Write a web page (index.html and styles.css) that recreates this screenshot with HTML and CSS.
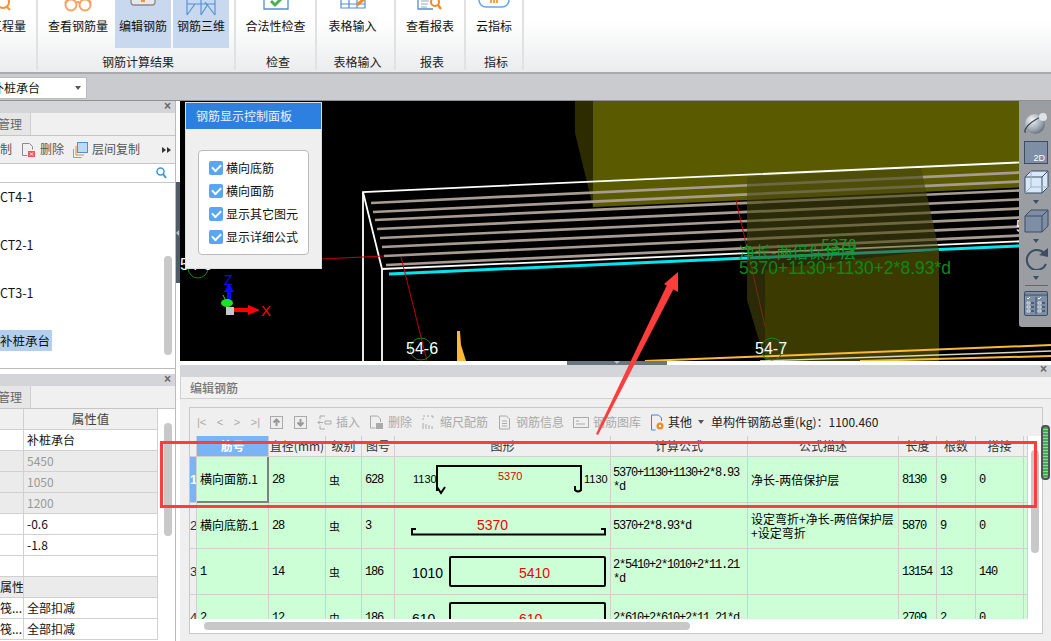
FILE: index.html
```html
<!DOCTYPE html>
<html lang="zh">
<head>
<meta charset="utf-8">
<title>编辑钢筋</title>
<link rel="stylesheet" href="styles.css">
</head>
<body>
<div class="app">
  <header class="ribbon">
    <section class="group group-a">
      <div class="btns"><div class="btn btn-cut"><svg class="ico" width="36" height="19" viewBox="0 0 36 19"><circle cx="13" cy="2" r="6" fill="none" stroke="#f3923c" stroke-width="2"/><path d="M17 7l3 3" stroke="#f3923c" stroke-width="2"/></svg><span>工程量</span></div></div>
    </section>
    <section class="group group-b">
      <div class="btns">
        <div class="btn btn-w70"><svg class="ico" width="36" height="19" viewBox="0 0 36 19"><g fill="none" stroke="#f6a266" stroke-width="2"><circle cx="11" cy="5" r="5.500"/><circle cx="25" cy="5" r="5.500"/><path d="M16 3q2-2 4 0M5 3L7 0M31 3l-2-3"/></g></svg><span>查看钢筋量</span></div>
        <div class="btn btn-w56 on"><svg class="ico" width="36" height="19" viewBox="0 0 36 19"><rect x="6" y="-6" width="24" height="11" rx="3" fill="#e8e8e8" stroke="#8a8a8a" stroke-width="1.300"/><path d="M16 1h4" stroke="#f3923c" stroke-width="2"/></svg><span>编辑钢筋</span></div>
        <div class="btn btn-w56 on"><svg class="ico" width="36" height="19" viewBox="0 0 36 19"><g fill="none" stroke="#4f8fd8" stroke-width="1.100"><path d="M4 0v15M32 0v15M18 0v15M4 15L12 4h20M18 15L25 4M4 4h8"/><path d="M32 15L22 2"/></g></svg><span>钢筋三维</span></div>
      </div>
      <div class="gname gname-b">钢筋计算结果</div>
    </section>
    <section class="group group-c">
      <div class="btns"><div class="btn btn-wide"><svg class="ico" width="36" height="19" viewBox="0 0 36 19"><path d="M6 0v9h24V0" fill="#fff" stroke="#4f8fd8" stroke-width="1.300"/><path d="M13 1l4 4 6-6" fill="none" stroke="#4caf50" stroke-width="3"/></svg><span>合法性检查</span></div></div>
      <div class="gname gname-c">检查</div>
    </section>
    <section class="group group-d">
      <div class="btns"><div class="btn btn-shift"><svg class="ico" width="36" height="19" viewBox="0 0 36 19"><path d="M6 0v8h24V0M6 4h24M14 0v8M22 0v8" fill="#fff" stroke="#4f8fd8" stroke-width="1.200"/><path d="M22 5l7-6" stroke="#f08a24" stroke-width="3"/></svg><span>表格输入</span></div></div>
      <div class="gname gname-b">表格输入</div>
    </section>
    <section class="group group-e">
      <div class="btns"><div class="btn btn-wide"><svg class="ico" width="36" height="19" viewBox="0 0 36 19"><path d="M6 0v9h15" fill="none" stroke="#4f8fd8" stroke-width="1.300"/><path d="M9 1h8M9 4h7M9 7h6" stroke="#8fa6bd"/><circle cx="23" cy="2" r="4" fill="#fff" stroke="#f08a24" stroke-width="2"/><path d="M26 5l3 4" stroke="#f08a24" stroke-width="2.400"/></svg><span>查看报表</span></div></div>
      <div class="gname gname-b">报表</div>
    </section>
    <section class="group group-f">
      <div class="btns"><div class="btn btn-wide"><svg class="ico" width="36" height="19" viewBox="0 0 36 19"><rect x="3" y="-10" width="30" height="17" rx="7" fill="#fff" stroke="#67a6ea" stroke-width="1.500"/><path d="M15 0v3M18 0v3M21 0v3" stroke="#f08a24" stroke-width="1.600"/></svg><span>云指标</span></div></div>
      <div class="gname gname-b">指标</div>
    </section>
  </header>

  <div class="subbar">
    <div class="dropdown"><span class="dd-text">补桩承台</span><i class="caret"></i></div>
  </div>

  <main class="main">
    <aside class="side">
      <section class="pane pane-top">
        <div class="pane-head">×</div>
        <div class="tabs"><div class="tab">管理</div></div>
        <div class="side-tools">
          <span class="cut-word">复制</span>
          <span class="stool"><svg width="15" height="16" viewBox="0 0 15 16"><path d="M1.500 1.500h7l3 3v3M1.500 1.500v12h5" fill="none" stroke="#8c8c8c"/><rect x="7" y="9" width="7" height="6" fill="#e45b5b"/><path d="M9 10.500l3 3M12 10.500l-3 3" stroke="#fff"/></svg>删除</span>
          <span class="stool"><svg width="15" height="16" viewBox="0 0 15 16"><rect x="4.500" y=".5" width="10" height="10" fill="#bcd9f7" stroke="#4f8fd8"/><path d="M3 4v9h8M.5 7v8.500h8" fill="none" stroke="#f08a24"/></svg>层间复制</span>
          <span class="more"><i></i><i></i></span>
        </div>
        <div class="search"><svg width="11" height="12" viewBox="0 0 11 12"><circle cx="4.500" cy="4.500" r="3.500" fill="none" stroke="#3e96d6" stroke-width="1.500"/><path d="M7 7l3 4" stroke="#3e96d6" stroke-width="2"/></svg></div>
        <ul class="items">
          <li>CT4-1</li>
          <li>CT2-1</li>
          <li>CT3-1</li>
          <li><span class="sel">补桩承台</span></li>
        </ul>
        <div class="vbar vbar-a"></div>
      </section>
      <section class="pane pane-bot">
        <div class="pane-head">×</div>
        <div class="tabs"><div class="tab">管理</div></div>
        <table class="prop">
          <colgroup><col class="p1"><col class="p2"></colgroup>
          <tr class="phead"><th></th><th>属性值</th></tr>
          <tr><td></td><td>补桩承台</td></tr>
          <tr class="dis"><td></td><td>5450</td></tr>
          <tr class="dis"><td></td><td>1050</td></tr>
          <tr class="dis"><td></td><td>1200</td></tr>
          <tr><td></td><td>-0.6</td></tr>
          <tr><td></td><td>-1.8</td></tr>
          <tr><td></td><td></td></tr>
          <tr class="grp"><td><span class="clip-r">属性</span></td><td></td></tr>
          <tr><td><span class="clip-r">筏...</span></td><td>全部扣减</td></tr>
          <tr><td><span class="clip-r">筏...</span></td><td>全部扣减</td></tr>
        </table>
        <div class="vbar vbar-b"></div>
      </section>
    </aside>
    <div class="split"><div class="split-handle"><i></i></div></div>

    <div class="work">
      <div class="view">
        <svg class="scene" viewBox="180 101 871 260" width="871" height="260" aria-hidden="true">
          <rect x="180" y="100" width="871" height="261" fill="#000"/>
          <polygon points="575,100 593,100 593,207 575,133" fill="#2c2c00"/>
          <polygon points="593,100 1051,100 1051,186 593,207" fill="#5a5a00"/>
          <g stroke="#a89c92" stroke-width="2.700">
            <path d="M371 203L1051 171"/><path d="M373 212L1051 180"/><path d="M375 220L1051 189"/><path d="M377 229L1051 198"/><path d="M380 238L1051 207"/><path d="M382 247L1051 216"/><path d="M384 256L1051 225"/><path d="M386 265L1051 234"/>
          </g>
          <path d="M389 274L1051 244.500" stroke="#00e6f0" stroke-width="3"/>
          <g fill="none" stroke="#fff" stroke-width="1.800">
            <path d="M363 361V192L1051 161"/><path d="M363 192L382 269L1051 240"/><path d="M382 269V361"/>
          </g>
          <g stroke="#c40000" fill="none">
            <path d="M320 259L384 256"/><path d="M401 257L427 361"/><path d="M736 200L773 361"/>
          </g>
          <polygon points="747,177 921,168 939,250 939,361 765,361 747,300" fill="#46460f" fill-opacity=".6"/>
          <polygon points="765,270 939,250 939,361 765,361" fill="#3e3e00" fill-opacity=".85"/>
          <g stroke="#fbb83a" stroke-width="2"><path d="M645 361L1051 345"/><path d="M860 361L1051 356"/></g>
          <path d="M760 361L1051 351" stroke="#d9d9c8" stroke-width="1.500"/>
          <polygon points="457,361 457,331 460,331 461,345 466,361" fill="#fbb83a"/>
          <g fill="none" stroke="#0b8a0b"><circle cx="421" cy="349" r="11"/><circle cx="772" cy="349" r="11"/><circle cx="198" cy="268" r="10"/></g>
          <g class="axis-label"><text x="406" y="354">54-6</text><text x="755" y="354">54-7</text><text x="180" y="270">54-6</text><text x="1016" y="232">5</text></g>
          <text class="green-a" x="739" y="258">净长-两倍保护层</text>
          <text class="green-a" x="821" y="251">5370</text>
          <text class="green-b" x="739" y="274">5370+1130+1130+2*8.93*d</text>
          <path d="M229 304V288" stroke="#0a0aff" stroke-width="4"/>
          <polygon points="229,283 224,292 234,292" fill="#0a0aff"/>
          <text class="axis-z" x="224" y="285">Z</text>
          <path d="M223 295l3 6" stroke="#20e020"/>
          <ellipse cx="227" cy="303" rx="6" ry="4" fill="#20e020"/>
          <path d="M233 310H250" stroke="#f00" stroke-width="4"/>
          <polygon points="260,310 248,305 248,315" fill="#f00"/>
          <text class="axis-x" x="261" y="316">X</text>
          <rect x="226" y="307" width="8" height="8" fill="#c8c8c8"/>
        </svg>

        <div class="ctrl">
          <div class="ctrl-title">钢筋显示控制面板</div>
          <div class="ctrl-box">
            <label class="chk"><i></i>横向底筋</label>
            <label class="chk"><i></i>横向面筋</label>
            <label class="chk"><i></i>显示其它图元</label>
            <label class="chk"><i></i>显示详细公式</label>
          </div>
        </div>

        <div class="vtools">
          <svg width="26" height="24" viewBox="0 0 26 24"><defs><radialGradient id="pl" cx=".35" cy=".3" r=".85"><stop offset="0" stop-color="#f2f4f6"/><stop offset=".6" stop-color="#9aa4ae"/><stop offset="1" stop-color="#4e5965"/></radialGradient></defs><circle cx="12" cy="13" r="10" fill="url(#pl)"/><path d="M3 21C0 22 3 15 9 11S22 3 24 5" fill="none" stroke="#39434e" stroke-width="1.200"/><circle cx="20" cy="6" r="4" fill="#dfe3e7"/></svg>
          <div class="t2d">2D</div>
          <svg width="25" height="24" viewBox="0 0 25 24"><path d="M7 1h17v16l-6 6H1V7z" fill="#d7e8fb" stroke="#3d4d63"/><path d="M1 7h17v16M18 7l6-6" fill="none" stroke="#3d4d63"/><path d="M7 1v16H24M7 17l-6 6" fill="none" stroke="#9fb2c6"/></svg>
          <i class="tri"></i>
          <svg width="25" height="24" viewBox="0 0 25 24"><path d="M7 1h17v16l-6 6H1V7z" fill="#7e8ea5" stroke="#3d4d63"/><path d="M1 7h17v16M18 7l6-6" fill="none" stroke="#3d4d63"/></svg>
          <i class="tri"></i>
          <svg width="25" height="22" viewBox="0 0 25 22"><path d="M20 5A10 10 0 1 0 22 16" fill="none" stroke="#3d4d63" stroke-width="2"/><polygon points="24,0 24,9 15,7" fill="#3d4d63"/></svg>
          <i class="tri"></i>
          <div class="rule"></div>
          <svg width="24" height="25" viewBox="0 0 24 25"><rect x=".5" y=".5" width="23" height="24" rx="1.500" fill="#7e8ea5" stroke="#3d4d63"/><path d="M1 4h22M12 6v17" stroke="#3d4d63"/><path d="M3 7l1 1 2-2M14 7l1 1 2-2" stroke="#fff" fill="none"/><path d="M3 11h3v2H3zM3 15h3v2H3zM3 19h3v2H3zM14 11h3v2h-3zM14 15h3v2h-3zM14 19h3v2h-3z" fill="none" stroke="#e6ebf0" stroke-width=".8"/><path d="M7 12h3M7 16h3M7 20h3M18 12h3M18 16h3M18 20h3" stroke="#1f2c3c"/></svg>
        </div>
      </div>

      <div class="hsplit"><div class="hsplit-handle"><i></i></div></div>

      <section class="editor">
        <div class="editor-strip">×</div>
        <div class="editor-title">编辑钢筋</div>
        <div class="grid">
          <div class="gtools">
            <span class="nav"><b>|&lt;</b><b>&lt;</b><b>&gt;</b><b>&gt;|</b></span>
            <svg class="gi" width="15" height="15" viewBox="0 0 15 15"><rect x="1.500" y="1.500" width="12" height="12" fill="#eee" stroke="#aaa"/><path d="M7.500 11V5M4.500 7.500l3-3 3 3" fill="none" stroke="#999" stroke-width="2"/></svg>
            <svg class="gi" width="15" height="15" viewBox="0 0 15 15"><rect x="1.500" y="1.500" width="12" height="12" fill="#eee" stroke="#aaa"/><path d="M7.500 4v6M4.500 7.500l3 3 3-3" fill="none" stroke="#999" stroke-width="2"/></svg>
            <span class="gt"><svg width="15" height="15" viewBox="0 0 15 15"><path d="M3 1h5M3 14h5M3 1v3M3 11v3M6 7.500H1M3 5.500l-2 2 2 2" fill="none" stroke="#aaa"/><path d="M8 6h6v3H8z" fill="none" stroke="#aaa"/></svg>插入</span>
            <span class="gt"><svg width="15" height="15" viewBox="0 0 15 15"><path d="M1.500 1h7l3 3v3M1.500 1v12h5" fill="none" stroke="#aaa"/><rect x="7" y="8" width="7" height="6" fill="#aaa"/></svg>删除</span>
            <span class="gt"><svg width="15" height="15" viewBox="0 0 15 15"><path d="M2 1h2M6 1h2M10 1h2v2M2 3v2M2 14V8M5 14V9M8 14v-4M11 14V11" fill="none" stroke="#aaa"/></svg>缩尺配筋</span>
            <span class="gt"><svg width="15" height="15" viewBox="0 0 15 15"><path d="M2.500 1h7l3 3v10h-10zM5 6h5M5 8.500h5M5 11h5" fill="none" stroke="#aaa"/></svg>钢筋信息</span>
            <span class="gt"><svg width="16" height="15" viewBox="0 0 16 15"><rect x=".5" y="2.500" width="15" height="10" fill="none" stroke="#aaa"/><path d="M3 6h3M3 9h9" stroke="#aaa"/></svg>钢筋图库</span>
            <span class="gt gt-on"><svg width="15" height="17" viewBox="0 0 15 17"><path d="M1.500 1h7l3 3v3M1.500 1v15h4" fill="none" stroke="#3c84d8"/><circle cx="10" cy="12" r="3.500" fill="#f08a24"/><circle cx="10" cy="12" r="1.200" fill="#fff"/></svg>其他</span>
            <i class="gcaret"></i>
            <span class="gtotal">单构件钢筋总重(kg)：1100.460</span>
          </div>
          <div class="tbl-wrap">
            <table class="rebar">
              <colgroup><col class="c0"><col class="c1"><col class="c2"><col class="c3"><col class="c4"><col class="c5"><col class="c6"><col class="c7"><col class="c8"><col class="c9"><col class="c10"><col class="c11"></colgroup>
              <tr class="hd">
                <th></th><th class="hd-sel">筋号</th><th>直径(mm)</th><th>级别</th><th>图号</th><th>图形</th><th>计算公式</th><th>公式描述</th><th>长度</th><th>根数</th><th>搭接</th><th></th>
              </tr>
              <tr>
                <th class="rh rh-sel">1</th><td class="cur">横向面筋.1</td><td class="m">28</td><td class="lv">虫</td><td class="m">628</td>
                <td class="fig"><svg width="215" height="45" viewBox="395 457 215 45"><text class="f-b" x="413" y="483">1130</text><path d="M437 491V466H581V491" fill="none" stroke="#000" stroke-width="2"/><path d="M437 487l4 6 4-6M581 486v4q-3 3-6 0v-4" fill="none" stroke="#000" stroke-width="2"/><text class="f-r" x="498" y="480">5370</text><text class="f-b" x="584" y="483">1130</text></svg></td>
                <td class="m f">5370+1130+1130+2*8.93*d</td><td class="cn">净长-两倍保护层</td><td class="m">8130</td><td class="m">9</td><td class="m">0</td><td></td>
              </tr>
              <tr>
                <th class="rh">2</th><td class="simsun">横向底筋.<span class="m-in">1</span></td><td class="m">28</td><td class="lv">虫</td><td class="m">3</td>
                <td class="fig"><svg width="215" height="45" viewBox="395 503 215 45"><path d="M416 529h-4v5.500H605v-5.500h-4" fill="none" stroke="#000" stroke-width="2"/><text class="f-rl" x="477" y="530">5370</text></svg></td>
                <td class="m f">5370+2*8.93*d</td><td class="cn">设定弯折+净长-两倍保护层 +设定弯折</td><td class="m">5870</td><td class="m">9</td><td class="m">0</td><td></td>
              </tr>
              <tr>
                <th class="rh">3</th><td class="m">1</td><td class="m">14</td><td class="lv">虫</td><td class="m">186</td>
                <td class="fig"><svg width="215" height="45" viewBox="395 549 215 45"><text class="f-bl" x="412" y="578">1010</text><rect x="450" y="557" width="155" height="29" rx="1" fill="none" stroke="#000" stroke-width="2"/><text class="f-rl" x="519" y="578">5410</text></svg></td>
                <td class="m f">2*5410+2*1010+2*11.21*d</td><td></td><td class="m">13154</td><td class="m">13</td><td class="m">140</td><td></td>
              </tr>
              <tr>
                <th class="rh">4</th><td class="m">2</td><td class="m">12</td><td class="lv">虫</td><td class="m">186</td>
                <td class="fig"><svg width="215" height="45" viewBox="395 595 215 45"><text class="f-bl" x="412" y="624">610</text><rect x="450" y="603" width="155" height="29" rx="1" fill="none" stroke="#000" stroke-width="2"/><text class="f-rl" x="519" y="624">610</text></svg></td>
                <td class="m f">2*610+2*610+2*11.21*d</td><td></td><td class="m">2709</td><td class="m">2</td><td class="m">0</td><td></td>
              </tr>
            </table>
          </div>
          <div class="hbar"><div class="hbar-thumb"></div></div>
          <div class="vbar vbar-c"></div>
        </div>
        <div class="thumb-green"></div>
      </section>
    </div>
  </main>
</div>

<div class="mark-box"></div>
<svg class="mark-arrow" width="1051" height="641" viewBox="0 0 1051 641" aria-hidden="true">
  <polygon points="596,434 598,435 674,288 667,285" fill="#ff3d3d"/>
  <polygon points="678,272 664,284 678,292" fill="#ff3d3d"/>
</svg>
</body>
</html>
```

FILE: styles.css
```css
* { box-sizing: border-box; }
html, body { margin: 0; height: 100%; }
body {
  width: 1051px; height: 641px; overflow: hidden; position: relative;
  font: 12px/1.2 "Noto Sans CJK SC", "Liberation Sans", sans-serif; color: #111; background: #fff;
}
.app { display: flex; flex-direction: column; height: 641px; }

/* ribbon */
.ribbon {
  flex: none; height: 74px; display: flex; border-bottom: 2px solid #a8aaad;
  background: linear-gradient(#fff 30%, #eaeced);
}
.group { flex: none; height: 70px; border-right: 2px solid #dfe1e2; display: flex; flex-direction: column; }
.group-a { width: 38px; }
.group-b { width: 198px; }
.group-c { width: 81px; }
.group-d { width: 79px; }
.group-e { width: 70px; }
.group-f { width: 58px; }
.btns { display: flex; height: 48px; flex: none; }
.btn { display: flex; flex-direction: column; align-items: center; height: 48px; white-space: nowrap; overflow: visible; }
.btn span { line-height: 14px; }
.ico { flex: none; display: block; }
.btn-cut { width: 36px; margin-left: -10px; }
.btn-w70 { width: 70px; margin-left: 5px; margin-right: 1px; }
.btn-w56 { width: 56px; margin-left: 2px; }
.btn-w70 + .btn-w56 { margin-left: 1px; }
.btn-wide { width: 100%; }
.btn-shift { width: 100%; padding-right: 6px; }
.on { background: #c8d8ee; }
.gname { margin-top: 6px; text-align: center; line-height: 16px; color: #222; }
.gname-b { padding-left: 4px; }
.gname-c { padding-left: 5px; }

/* sub bar */
.subbar { flex: none; height: 27px; background: #c9cbce; border-bottom: 1px solid #8e9093; padding-top: 3px; }
.dropdown { width: 87px; height: 22px; background: #fff; border: 1px solid #b9bbbe; border-left: 0; display: flex; align-items: center; overflow: hidden; }
.dd-text { margin-left: -8px; white-space: nowrap; }
.caret { margin-left: auto; margin-right: 5px; border: 3px solid transparent; border-top: 4px solid #555; border-bottom: 0; }

.main { flex: 1; display: flex; min-height: 0; }

/* sidebar */
.side { width: 176px; flex: none; display: flex; flex-direction: column; gap: 5px; background: #fff; border-right: 1px solid #bbb; }
.pane { position: relative; overflow: hidden; }
.pane-top { height: 268px; border-bottom: 1px solid #bbb; }
.pane-bot { flex: 1; }
.pane-head { height: 12px; background: #d4d5d9; text-align: right; padding-right: 4px; font: 12px/11px "Liberation Sans", sans-serif; color: #666; font-weight: bold; }
.tabs { height: 23px; background: #f0f0f0; border-bottom: 1px solid #c6c6c6; }
.tab { width: 31px; height: 22px; background: #e6e6e6; border-right: 1px solid #d0d0d0; color: #666; line-height: 22px; white-space: nowrap; overflow: hidden; text-indent: -2px; font-size: 12px; }
.side-tools { height: 28px; background: #f0f0f0; display: flex; align-items: center; gap: 9px; border-bottom: 1px solid #c6c6c6; color: #555; white-space: nowrap; }
.cut-word { margin-left: -12px; }
.stool { display: flex; align-items: center; gap: 4px; }
.more { margin-left: auto; margin-right: 4px; display: flex; gap: 1px; }
.more i { border: 3px solid transparent; border-left: 4px solid #333; border-right: 0; }
.search { height: 19px; border-bottom: 1px solid #c6c6c6; display: flex; align-items: center; justify-content: flex-end; padding-right: 8px; }
.items { list-style: none; margin: 0; padding: 3px 0 0; display: flex; flex-direction: column; gap: 27px; }
.items li { height: 21px; line-height: 21px; white-space: nowrap; font-size: 12.500px; }
.sel { display: inline-block; height: 21px; width: 52px; background: #b4cfee; }
.vbar { position: absolute; width: 8px; border-radius: 4px; background: #c8c8c8; }
.vbar-a { left: 164px; top: 155px; height: 99px; }
.vbar-b { left: 164px; top: 49px; height: 113px; }
.prop { border-collapse: separate; border-spacing: 0; table-layout: fixed; width: 158px; }
.p1 { width: 24px; }
.p2 { width: 134px; }
.prop th, .prop td { height: 21px; padding: 0 3px; border-right: 1px solid #d0d0d0; border-bottom: 1px solid #d0d0d0; font-weight: normal; white-space: nowrap; line-height: 20px; }
.prop th { background: #f0f0f0; color: #444; font-size: 12.500px; }
.dis td { background: #ebebeb; color: #999; }
.grp td { background: #ebebeb; }
.prop td:first-child { overflow: hidden; padding: 0; text-align: right; }
.clip-r { margin-right: 1px; }

/* splitter */
.split { width: 4px; flex: none; padding-top: 81px; background: #fff; }
.split-handle { width: 4px; height: 101px; background: #4f5b66; display: flex; align-items: center; }
.split-handle i { border: 3px solid transparent; border-right-color: #b9c0c6; border-left: 0; }

/* work area */
.work { flex: 1; display: flex; flex-direction: column; min-width: 0; }
.view { position: relative; height: 260px; flex: none; overflow: hidden; }
.scene { display: block; }
.axis-label text { font: 16px "Liberation Sans", sans-serif; fill: #fff; }
.green-a { font: 16px "Noto Sans CJK SC", sans-serif; fill: #0a9a2a; }
.green-b { font: 17.500px "Liberation Sans", sans-serif; fill: #0a8a12; }
.axis-z { font: 14px "Liberation Sans", sans-serif; fill: #0a0aff; }
.axis-x { font: 15px "Liberation Sans", sans-serif; fill: #f00; }

.ctrl { position: absolute; left: 6px; top: 2px; width: 135px; height: 165px; background: #efefef; box-shadow: 0 0 0 1px #ddd; }
.ctrl-title { height: 26px; background: #2e80e0; color: #e8f0fb; line-height: 26px; padding-left: 10px; }
.ctrl-box { margin: 21px 12px 0; height: 105px; background: #fff; border: 1px solid #bbb; border-radius: 4px; padding: 10px 10px; display: flex; flex-direction: column; gap: 9px; }
.chk { display: flex; align-items: center; gap: 3px; height: 14px; white-space: nowrap; }
.chk i { position: relative; width: 14px; height: 14px; border-radius: 2px; background: #5aa5f5; flex: none; }
.chk i::after { content: ""; position: absolute; left: 3px; top: 2.500px; width: 7px; height: 4px; border-left: 2px solid #fff; border-bottom: 2px solid #fff; transform: rotate(-45deg); }

.vtools { position: absolute; right: 0; top: 0; width: 32px; height: 226px; background: #9a9da2; border-radius: 0 0 0 3px; display: flex; flex-direction: column; align-items: center; padding: 10px 0 0 2px; }
.t2d { width: 24px; height: 23px; margin-top: 6px; margin-bottom: 6px; background: #7e8ea5; border: 1px solid #3d4d63; font: 9px/10px "Liberation Sans", sans-serif; color: #fff; text-align: right; padding: 11px 2px 0 0; }
.tri { flex: none; margin: 6px 0 5px; border: 3px solid transparent; border-top: 4px solid #3d4d63; border-bottom: 0; }
.rule { width: 23px; height: 1px; background: #666; margin: 0 0 5px; }

.hsplit { height: 4px; flex: none; background: #fff; display: flex; padding-left: 387px; }
.hsplit-handle { width: 100px; height: 4px; background: #6b7780; display: flex; justify-content: center; }
.hsplit-handle i { border: 3px solid transparent; border-top: 3px solid #b9c0c6; border-bottom: 0; }

/* editor */
.editor { flex: 1; background: #efefef; position: relative; min-height: 0; }
.editor-strip { height: 12px; background: #d4d5d9; text-align: right; padding-right: 4px; font: 12px/9px "Liberation Sans", sans-serif; color: #666; font-weight: bold; }
.editor-title { height: 22px; border-bottom: 1px solid #d0d0d0; line-height: 21px; padding-left: 9px; color: #777; font-weight: 500; background: #f2f2f2; border-left: 1px solid #d0d0d0; }
.grid { position: relative; margin: 8px 0 0 9px; width: 854px; height: 227px; border: 1px solid #c8c8c8; background: #fff; }
.gtools { height: 28px; background: #efefef; display: flex; align-items: center; gap: 9px; padding-left: 7px; color: #aaa; white-space: nowrap; }
.nav { width: 63px; display: flex; justify-content: space-between; font: 11px "Liberation Sans", sans-serif; color: #aaa; }
.nav b { font-weight: normal; }
.gi { flex: none; }
.gt { display: flex; align-items: center; gap: 4px; }
.gt-on { color: #222; gap: 3px; }
.gcaret { margin-left: -3px; border: 3px solid transparent; border-top: 4px solid #555; border-bottom: 0; }
.gtotal { color: #222; margin-left: -2px; font-size: 12px; }
.tbl-wrap { height: 183px; overflow: hidden; }
.rebar { border-collapse: separate; border-spacing: 0; table-layout: fixed; width: 838px; }
.c0 { width: 7px; } .c1 { width: 72px; } .c2 { width: 57px; } .c3 { width: 36px; } .c4 { width: 33px; } .c5 { width: 216px; } .c6 { width: 137px; } .c7 { width: 151px; } .c8 { width: 38px; } .c9 { width: 39px; } .c10 { width: 48px; } .c11 { width: 4px; }
.rebar th, .rebar td { border-right: 1px solid #d0d0d0; border-bottom: 1px solid #d0d0d0; padding: 0; overflow: hidden; }
.hd th { height: 21px; background: #efefef; font-weight: normal; color: #333; white-space: nowrap; line-height: 20px; }
.hd th.hd-sel { background: #7ab4f5; color: #fff; font-weight: bold; }
.rebar td { height: 46px; background: #ccffd6; vertical-align: middle; padding-left: 3px; line-height: 14px; color: #000; }
.rh { background: #efefef; font: 13px "Liberation Sans", sans-serif; color: #333; }
.rebar th.rh-sel { background: #7ab4f5; color: #fff; font-weight: bold; }
.rebar td.cur { border-right: 2px solid #808080; border-bottom: 2px solid #808080; font-size: 12px; white-space: nowrap; }
.m, .m-in { font: 12px/14px "Liberation Mono", monospace; letter-spacing: -1.200px; }
.rebar td.f { word-break: break-all; padding: 0 2px; }
.cn { font-size: 12px; }
.simsun { white-space: nowrap; }
.lv { font-size: 11px; text-align: left; padding-left: 3px; }
.rebar td.fig { padding: 0; vertical-align: top; }
.fig svg { display: block; }
.f-b { font: 11px "Liberation Sans", sans-serif; fill: #000; }
.f-r { font: 11px "Liberation Sans", sans-serif; fill: #e00000; }
.f-bl { font: 14px "Liberation Sans", sans-serif; fill: #000; }
.f-rl { font: 14px "Liberation Sans", sans-serif; fill: #f00000; }
.hbar { height: 14px; padding: 3px 0 0 14px; background: #fff; }
.hbar-thumb { width: 486px; height: 8px; border-radius: 4px; background: #c8c8c8; }
.vbar-c { left: 841px; top: 42px; height: 103px; }
.thumb-green {
  position: absolute; right: 1px; top: 60px; width: 9px; height: 55px; border-radius: 4px;
  background: repeating-linear-gradient(#3db04a 0 2px, #8fd49a 2px 3px); border: 2px solid #4e5256;
}

/* annotations */
.mark-box { position: absolute; left: 160px; top: 441px; width: 877px; height: 67px; border: 3px solid #ff3d3d; }
.mark-arrow { position: absolute; left: 0; top: 0; pointer-events: none; }
```
